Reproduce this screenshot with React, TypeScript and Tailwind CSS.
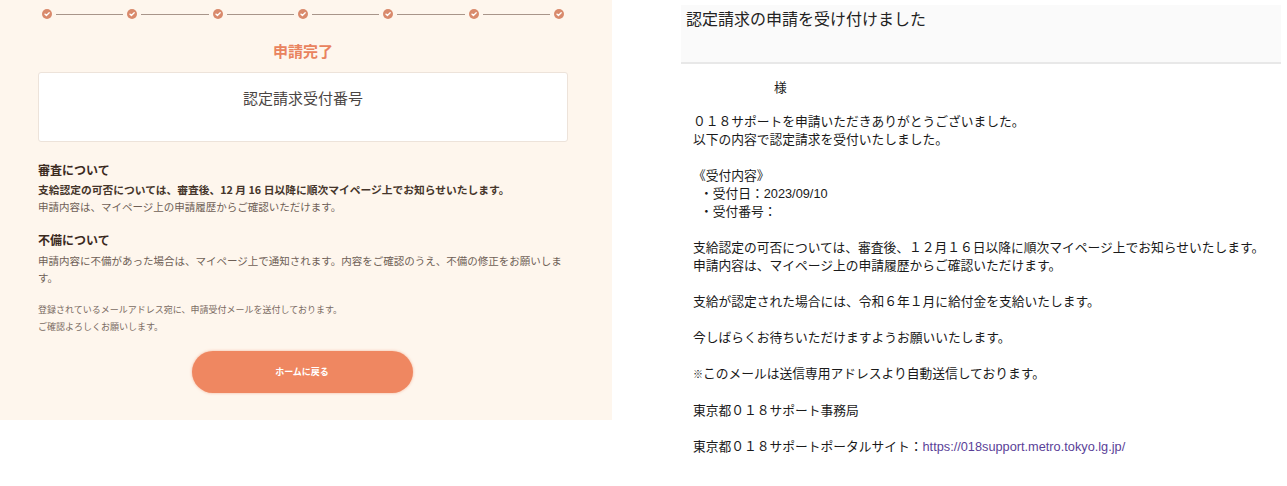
const steps = [1, 2, 3, 4, 5, 6, 7];

const jp = { fontFamily: '"Noto Sans CJK JP", "Noto Sans", sans-serif' };
const mail = { fontFamily: '"Liberation Sans", "Noto Sans CJK JP", sans-serif' };

export default function App() {
  return (
    <div className="flex h-[486px] w-[1287px] items-start bg-white">
      {/* ============ LEFT: completion page ============ */}
      <div className="w-[612px] bg-[#FEF6ED] pl-[38px] pr-[44px] pt-[9px] pb-[27px]" style={jp}>
        <div className="ml-[4px] flex w-[522px] items-center">
          {steps.map((s, i) => (
            <div key={s} className={`flex items-center ${i < steps.length - 1 ? "flex-1" : ""}`}>
              <CheckDot />
              {i < steps.length - 1 && <div className="mx-[4px] h-px flex-1 bg-[#A8958A]" />}
            </div>
          ))}
        </div>

        <h1 className="mt-[22px] text-center text-[15px] font-bold leading-[20px] text-[#E9835E]">申請完了</h1>

        <div className="mt-[11px] h-[70px] w-[530px] rounded-[3px] border border-[#EDE3DA] bg-white pt-[14px] text-center text-[15px] leading-[22px] text-[#4A4543]">
          認定請求受付番号
        </div>

        <div className="w-[530px]">
          <h2 className="mt-[19px] text-[12px] font-bold leading-[18px] text-[#3B2A1E]">審査について</h2>
          <p className="mt-[1.5px] text-[10.75px] font-bold leading-[17px] text-[#45352A]">
            支給認定の可否については、審査後、12 月 16 日以降に順次マイページ上でお知らせいたします。
          </p>
          <p className="text-[10.5px] leading-[17px] text-[#6E5F56]">申請内容は、マイページ上の申請履歴からご確認いただけます。</p>

          <h2 className="mt-[16.5px] text-[12px] font-bold leading-[18px] text-[#3B2A1E]">不備について</h2>
          <p className="mt-[2.5px] text-[10.5px] leading-[17px] text-[#6E5F56]">
            申請内容に不備があった場合は、マイページ上で通知されます。内容をご確認のうえ、不備の修正をお願いします。
          </p>

          <p className="mt-[15px] text-[9px] leading-[17px] text-[#7A6B62]">
            登録されているメールアドレス宛に、申請受付メールを送付しております。
            <br />
            ご確認よろしくお願いします。
          </p>
        </div>

        <div className="mt-[16.5px] flex w-[530px] justify-center">
          <button className="ml-[-2px] h-[42px] w-[221px] rounded-full bg-[#EF8761] text-[9px] font-bold text-white shadow-[0_0_3px_rgba(239,135,97,0.6)]">
            ホームに戻る
          </button>
        </div>
      </div>

      {/* ============ RIGHT: confirmation mail ============ */}
      <div className="ml-[69px] w-[600px] text-[12.75px] leading-[18px] text-[#1A1A1A]" style={mail}>
        <div className="mt-[5px] h-[59px] border-b-2 border-[#E8E8E8] bg-[#FAFAFA] pl-[5px] pt-[4px] text-[16px] leading-[22px] text-[#222]">
          認定請求の申請を受け付けました
        </div>

        <div className="pl-[12px]">
          <p className="mt-[15px] pl-[81px]">様</p>

          <p className="mt-[16px]">
            ０１８サポートを申請いただきありがとうございました。
            <br />
            以下の内容で認定請求を受付いたしました。
          </p>

          <div className="mt-[18px]">
            <p>《受付内容》</p>
            <p className="pl-[7px]">・受付日：2023/09/10</p>
            <p className="pl-[7px]">・受付番号：</p>
          </div>

          <p className="mt-[18px]">
            支給認定の可否については、審査後、１２月１６日以降に順次マイページ上でお知らせいたします。
            <br />
            申請内容は、マイページ上の申請履歴からご確認いただけます。
          </p>

          <p className="mt-[18px]">支給が認定された場合には、令和６年１月に給付金を支給いたします。</p>
          <p className="mt-[18px]">今しばらくお待ちいただけますようお願いいたします。</p>
          <p className="mt-[18px]">
            <span className="text-[10px]">※</span>このメールは送信専用アドレスより自動送信しております。
          </p>
          <p className="mt-[18px]">東京都０１８サポート事務局</p>
          <p className="mt-[18px]">
            東京都０１８サポートポータルサイト：<span className="text-[#5A3F98]">https://018support.metro.tokyo.lg.jp/</span>
          </p>
        </div>
      </div>
    </div>
  );
}

function CheckDot() {
  return (
    <svg width="10" height="10" viewBox="0 0 10 10" className="shrink-0">
      <circle cx="5" cy="5" r="5" fill="#D98A6C" />
      <path d="M2.9 5.1 L4.4 6.5 L7.2 3.7" fill="none" stroke="#fff" strokeWidth="1.3" strokeLinecap="round" strokeLinejoin="round" />
    </svg>
  );
}
